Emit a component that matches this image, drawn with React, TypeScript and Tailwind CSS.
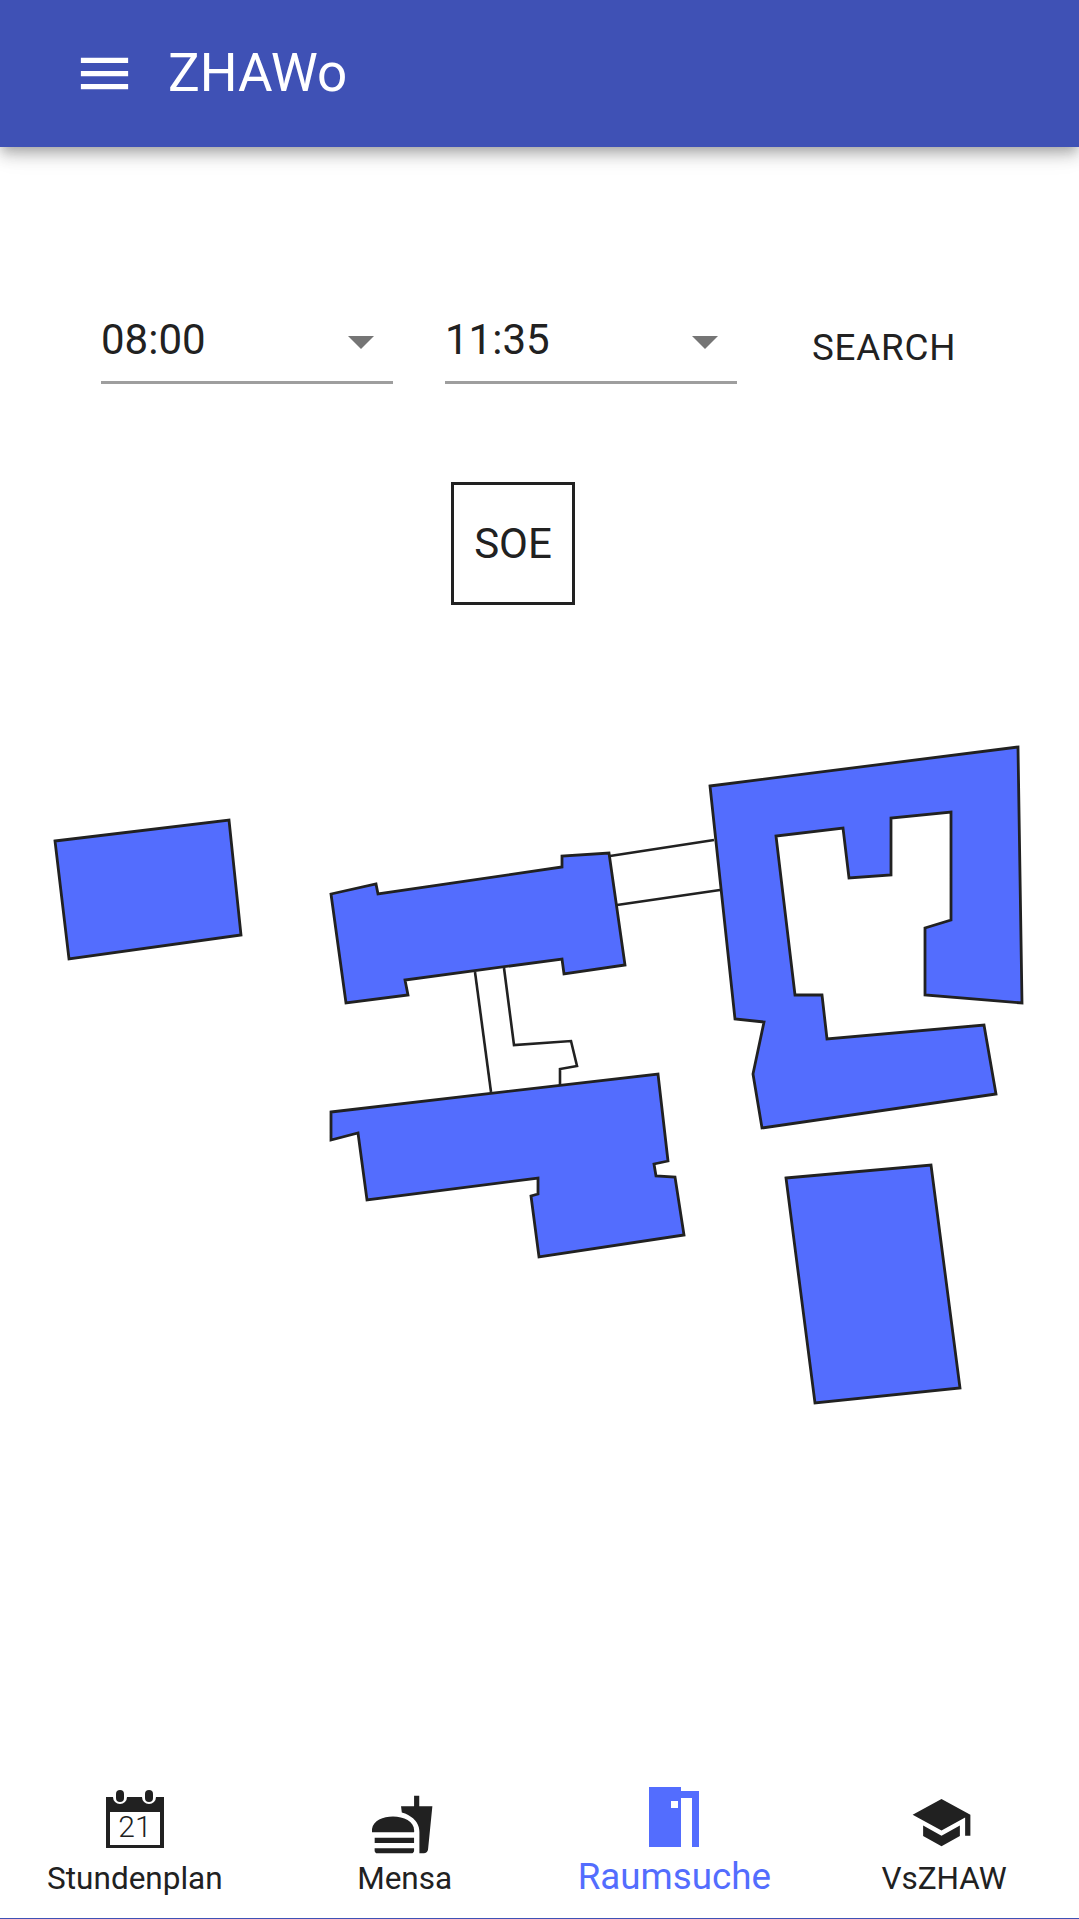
const BUILDINGS = [
  "55,841 229,820 241,935 69,959",
  "331,894 376,884 378,894 562,867 562,856 609,853 625,965 564,974 562,959 405,980 408,995 346,1003",
  "331,1112 658,1074 668,1161 654,1164 656,1176 675,1177 684,1235 539,1257 531,1196 538,1194 538,1178 367,1200 358,1133 331,1140",
  "710,786 1018,747 1022,1003 925,995 925,928 951,920 951,812 891,818 891,875 849,878 843,828 776,836 795,995 822,995 827,1039 984,1025 996,1094 762,1128 753,1074 764,1022 735,1019",
  "786,1178 931,1165 960,1388 815,1403",
];

const CONNECTORS = [
  "610,856 714,840",
  "617,905 720,890",
  "475,972 491,1092",
  "504,968 514,1045 571,1041 577,1066 560,1069 560,1085",
];

function CampusMap() {
  return (
    <svg viewBox="0 700 1079 720" className="block h-[720px] w-[1079px]">
      {CONNECTORS.map((points) => (
        <polyline key={points} points={points} fill="none" stroke="#212121" strokeWidth="2.6" />
      ))}
      {BUILDINGS.map((points) => (
        <polygon key={points} points={points} fill="#536dfe" stroke="#212121" strokeWidth="2.8" />
      ))}
    </svg>
  );
}

function TimeSelect({ value }: { value: string }) {
  return (
    <div className="flex h-[69px] w-[292px] items-start justify-between border-b-[3px] border-[#9e9e9e] pr-[19px] text-[42px] leading-[49px] text-[#212121]">
      <span>{value}</span>
      <svg viewBox="0 0 26 13" className="mt-[21px] h-[13px] w-[26px]">
        <path d="M0 0H26L13 13Z" fill="#757575" />
      </svg>
    </div>
  );
}

function CalendarIcon() {
  return (
    <svg viewBox="0 0 58 58" className="h-[58px] w-[58px]">
      <path d="M0 7H58V58H0Z" fill="#212121" />
      <path d="M4 22H54V55H4Z" fill="#fff" />
      <rect x="7" y="-2" width="14" height="16" rx="7" fill="#fff" />
      <rect x="36" y="-2" width="14" height="16" rx="7" fill="#fff" />
      <rect x="10" y="0" width="8" height="12" rx="4" fill="#212121" />
      <rect x="39" y="0" width="8" height="12" rx="4" fill="#212121" />
      <text x="29" y="47" textAnchor="middle" fontFamily="Roboto" fontWeight="300" fontSize="30" fill="#212121">
        21
      </text>
    </svg>
  );
}

function FoodIcon() {
  return (
    <svg viewBox="0 0 24 24" className="h-[63px] w-[63px]" fill="#212121">
      <path d="M18.06 22.99h1.66c.84 0 1.53-.64 1.63-1.46L23 5.05h-5V1h-1.97v4.05h-4.97l.3 2.34c1.71.47 3.31 1.32 4.27 2.26 1.44 1.42 2.43 2.89 2.43 5.29v8.05zM1 21.99V21h15.03v.99c0 .55-.45 1-1.01 1H2.01c-.56 0-1.01-.45-1.01-1zm15.03-7c.5-4-3.76-6-8.03-6-4.26 0-8.51 2-8.01 6h16.04zM1.02 17h15v2h-15z" />
    </svg>
  );
}

function DoorIcon() {
  return (
    <svg viewBox="0 0 50 60" className="h-[60px] w-[50px]" fill="#536dfe">
      <path fillRule="evenodd" d="M0 0H32V60H0ZM22 14V21H29V14Z" />
      <path d="M32 4H50V60H43V11H32Z" />
    </svg>
  );
}

function SchoolIcon() {
  return (
    <svg viewBox="0 0 24 24" className="h-[63px] w-[63px]" fill="#212121">
      <path d="M5 13.18v4L12 21l7-3.82v-4L12 17l-7-3.82zM12 3L1 9l11 6 9-4.91V17h2V9L12 3z" />
    </svg>
  );
}

export default function App() {
  return (
    <div className="flex h-[1919px] w-[1079px] flex-col overflow-hidden bg-white font-['Roboto',sans-serif] font-[385] text-[#212121]">
      <header className="z-10 flex h-[147px] shrink-0 items-center bg-[#3f51b5] pl-[73px] text-white shadow-[0_5px_10px_-3px_rgba(0,0,0,0.2),0_10px_13px_0_rgba(0,0,0,0.14),0_3px_26px_0_rgba(0,0,0,0.12)]">
        <svg viewBox="0 0 24 24" className="h-[63px] w-[63px]" fill="#fff">
          <path d="M3 18h18v-2H3v2zm0-5h18v-2H3v2zm0-7v2h18V6H3z" />
        </svg>
        <h1 className="ml-[32px] text-[53px] font-[385] leading-none">ZHAWo</h1>
      </header>

      <main className="flex-1">
        <div className="flex items-start pl-[101px] pt-[168px]">
          <TimeSelect value="08:00" />
          <div className="ml-[52px]">
            <TimeSelect value="11:35" />
          </div>
          <button className="ml-[75px] mt-[11px] text-[36.75px] leading-[43px] tracking-[0.8px]">SEARCH</button>
        </div>

        <div className="ml-[451px] mt-[98px] flex h-[123px] w-[124px] items-center justify-center border-[3px] border-[#212121] text-[42px]">
          SOE
        </div>

        <div className="mt-[95px]">
          <CampusMap />
        </div>
      </main>

      <nav className="grid h-[147px] shrink-0 grid-cols-4 border-b border-[#3f51b5]">
        <div className="flex flex-col items-center">
          <div className="flex h-[84px] items-end pb-[8px]">
            <CalendarIcon />
          </div>
          <span className="mt-[4px] text-[31.5px] leading-[37px]">Stundenplan</span>
        </div>
        <div className="flex flex-col items-center">
          <div className="mr-[2px] flex h-[84px] items-end">
            <FoodIcon />
          </div>
          <span className="mt-[4px] text-[31.5px] leading-[37px]">Mensa</span>
        </div>
        <div className="flex flex-col items-center">
          <div className="flex h-[82px] items-end pb-[7px]">
            <DoorIcon />
          </div>
          <span className="mt-[1px] text-[36.75px] leading-[43px] text-[#536dfe]">Raumsuche</span>
        </div>
        <div className="flex flex-col items-center">
          <div className="mr-[6px] flex h-[82px] items-end">
            <SchoolIcon />
          </div>
          <span className="mt-[6px] text-[31.5px] leading-[37px]">VsZHAW</span>
        </div>
      </nav>
    </div>
  );
}
